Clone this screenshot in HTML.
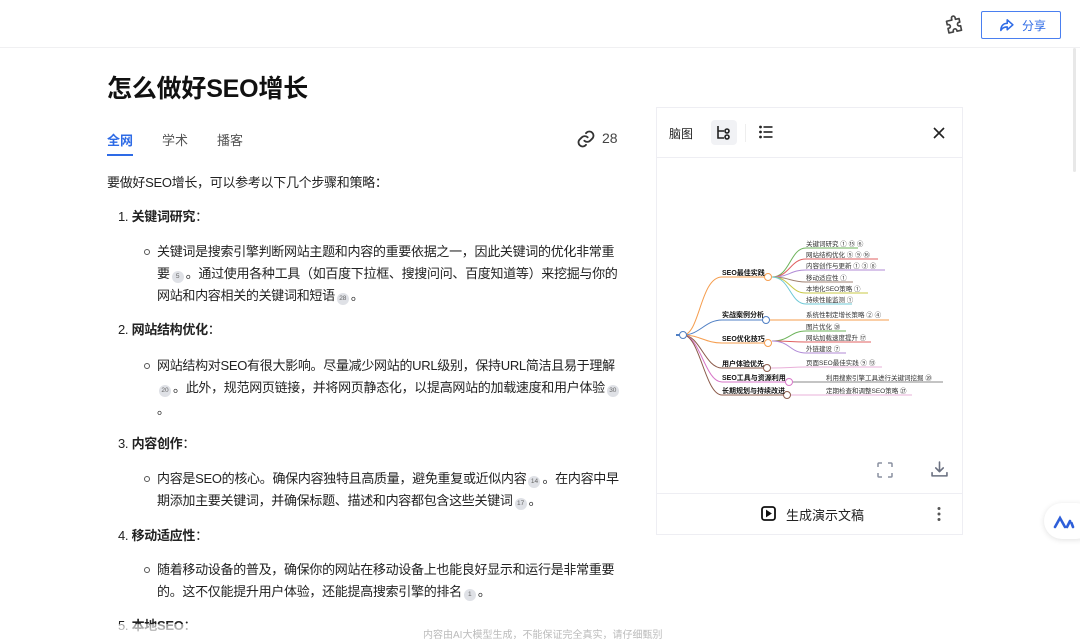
<!DOCTYPE html>
<html><head><meta charset="utf-8"><style>
*{margin:0;padding:0;box-sizing:border-box}
body{width:1080px;height:640px;overflow:hidden;background:#fff;font-family:"Liberation Sans","Noto Sans CJK SC",sans-serif;color:#222;position:relative}
.a{position:absolute;white-space:nowrap}
.l{font-size:13px;line-height:20px;color:#222;letter-spacing:-0.3px}
.c{display:inline-block;width:12px;height:12px;border-radius:50%;background:#dfe1e6;color:#666;font-size:6.5px;line-height:12px;text-align:center;vertical-align:0px;margin:0 2px;letter-spacing:0}
.dot{position:absolute;width:6px;height:6px;border:1px solid #555;border-radius:50%}
b{font-weight:700}
</style></head><body>
<div class="a" style="left:0;top:47px;width:1080px;height:1px;background:#f0f0f2"></div>
<div class="a" style="left:1073px;top:48px;width:3px;height:124px;background:#e8e8e8;border-radius:2px"></div>
<svg class="a" style="left:944px;top:15px" width="22" height="22" viewBox="0 0 24 24" fill="none" stroke="#444" stroke-width="1.8" stroke-linejoin="round"><path d="M10 3a2 2 0 0 1 4 0v2h4v4h-1a2 2 0 0 0 0 4h1v5h-5v-1a2 2 0 0 0-4 0v1H4v-5h1a2 2 0 0 0 0-4H4V5h6z" transform="rotate(-12 12 12)"/></svg>
<div class="a" style="left:981px;top:11px;width:80px;height:28px;border:1px solid #4a7ff0;border-radius:2px"></div>
<svg class="a" style="left:998px;top:17px" width="17" height="17" viewBox="0 0 24 24" fill="none" stroke="#2e6be6" stroke-width="2.2" stroke-linejoin="round"><path d="M13 4l8 7-8 7v-4c-4 0-7 1-9 5 0-6 3-10 9-10z"/></svg>
<div class="a" style="left:1022px;top:17px;font-size:12px;color:#2e6be6">分享</div>

<div class="a" style="left:107px;top:73px;font-size:25px;font-weight:700;color:#111;line-height:32px;letter-spacing:-0.2px">怎么做好SEO增长</div>
<div class="a" style="left:107px;top:130px;font-size:13px;color:#2e6be6;font-weight:700">全网</div>
<div class="a" style="left:107px;top:154px;width:26px;height:2px;background:#2e6be6"></div>
<div class="a" style="left:162px;top:130px;font-size:13px;color:#555">学术</div>
<div class="a" style="left:217px;top:130px;font-size:13px;color:#555">播客</div>
<svg class="a" style="left:576px;top:129px" width="20" height="20" viewBox="0 0 24 24" fill="none" stroke="#333" stroke-width="2.2" stroke-linecap="round"><path d="M10 14a5 5 0 0 0 7 0l3-3a5 5 0 0 0-7-7l-1 1"/><path d="M14 10a5 5 0 0 0-7 0l-3 3a5 5 0 0 0 7 7l1-1"/></svg>
<div class="a" style="left:602px;top:130px;font-size:14px;color:#444">28</div>

<div class="a l" style="left:107px;top:173px">要做好SEO增长，可以参考以下几个步骤和策略：</div>
<div class="a l" style="left:118px;top:207px">1. <b>关键词研究</b>：</div>
<div class="dot" style="left:144px;top:249px"></div>
<div class="a l" style="left:157px;top:242px">关键词是搜索引擎判断网站主题和内容的重要依据之一，因此关键词的优化非常重</div>
<div class="a l" style="left:157px;top:264px">要<span class="c">5</span>。通过使用各种工具（如百度下拉框、搜搜问问、百度知道等）来挖掘与你的</div>
<div class="a l" style="left:157px;top:286px">网站和内容相关的关键词和短语<span class="c">28</span>。</div>
<div class="a l" style="left:118px;top:320px">2. <b>网站结构优化</b>：</div>
<div class="dot" style="left:144px;top:363px"></div>
<div class="a l" style="left:157px;top:356px">网站结构对SEO有很大影响。尽量减少网站的URL级别，保持URL简洁且易于理解</div>
<div class="a l" style="left:157px;top:378px"><span class="c">20</span>。此外，规范网页链接，并将网页静态化，以提高网站的加载速度和用户体验<span class="c">30</span></div>
<div class="a l" style="left:157px;top:400px">。</div>
<div class="a l" style="left:118px;top:434px">3. <b>内容创作</b>：</div>
<div class="dot" style="left:144px;top:476px"></div>
<div class="a l" style="left:157px;top:469px">内容是SEO的核心。确保内容独特且高质量，避免重复或近似内容<span class="c">14</span>。在内容中早</div>
<div class="a l" style="left:157px;top:491px">期添加主要关键词，并确保标题、描述和内容都包含这些关键词<span class="c">17</span>。</div>
<div class="a l" style="left:118px;top:526px">4. <b>移动适应性</b>：</div>
<div class="dot" style="left:144px;top:567px"></div>
<div class="a l" style="left:157px;top:560px">随着移动设备的普及，确保你的网站在移动设备上也能良好显示和运行是非常重要</div>
<div class="a l" style="left:157px;top:582px">的。这不仅能提升用户体验，还能提高搜索引擎的排名<span class="c">1</span>。</div>
<div class="a l" style="left:118px;top:616px">5. <b>本地SEO</b>：</div>
<div class="a" style="left:0;top:624px;width:1080px;height:16px;background:linear-gradient(rgba(255,255,255,.5),#fff)"></div>
<div class="a" style="left:423px;top:626px;font-size:10px;color:#bbb">内容由AI大模型生成，不能保证完全真实，请仔细甄别</div>

<div class="a" style="left:656px;top:107px;width:307px;height:428px;border:1px solid #eeeef3;background:#fff"></div>
<div class="a" style="left:657px;top:157px;width:305px;height:1px;background:#eeeef3"></div>
<div class="a" style="left:657px;top:493px;width:305px;height:1px;background:#eeeef3"></div>
<div class="a" style="left:669px;top:125px;font-size:12px;color:#222">脑图</div>
<div class="a" style="left:711px;top:120px;width:26px;height:25px;background:#f1f2f5;border-radius:4px"></div>
<svg class="a" style="left:716px;top:125px" width="16" height="16" viewBox="0 0 16 16" fill="none" stroke="#222" stroke-width="1.6"><path d="M2 1v12h6M2 6h6"/><circle cx="11" cy="6" r="2"/><circle cx="11" cy="12" r="2"/></svg>
<div class="a" style="left:745px;top:124px;width:1px;height:18px;background:#eee"></div>
<svg class="a" style="left:759px;top:125px" width="14" height="14" viewBox="0 0 14 14" fill="#222"><circle cx="1.5" cy="2" r="1.4"/><circle cx="1.5" cy="7" r="1.4"/><circle cx="1.5" cy="12" r="1.4"/><rect x="4.5" y="1.2" width="9" height="1.6"/><rect x="4.5" y="6.2" width="9" height="1.6"/><rect x="4.5" y="11.2" width="9" height="1.6"/></svg>
<svg class="a" style="left:933px;top:127px" width="12" height="12" viewBox="0 0 12 12" stroke="#222" stroke-width="1.6"><path d="M1 1l10 10M11 1L1 11"/></svg>

<svg class="a" style="left:0;top:0" width="1080" height="640" font-family="Liberation Sans,Noto Sans CJK SC,sans-serif" font-size="7" fill="none">
<g stroke-width="1">
<path d="M683 335C700 335 700 277 722 277H768" stroke="#f59d4e"/>
<path d="M683 335C700 335 705 320 722 320H766" stroke="#4f7fc4"/>
<path d="M683 335C700 335 705 343 722 343H768" stroke="#f59d4e"/>
<path d="M683 335C700 335 705 368 722 368H767" stroke="#8b5a4a"/>
<path d="M683 335C700 335 705 382 722 382H789" stroke="#d776c8"/>
<path d="M683 335C700 335 705 395 722 395H787" stroke="#8b5a4a"/>
<path d="M676 335H683" stroke="#4f7fc4" stroke-width="2"/>
<path d="M772 277C790 277 790 248 806 248H858" stroke="#6db35a"/>
<path d="M772 277C790 277 790 259 806 259H878" stroke="#e06060"/>
<path d="M772 277C790 277 790 270 806 270H885" stroke="#b08ad6"/>
<path d="M772 277C790 277 790 282 806 282H853" stroke="#a08070"/>
<path d="M772 277C790 277 790 293 806 293H868" stroke="#c8c845"/>
<path d="M772 277C790 277 790 304 806 304H852" stroke="#6cc8d6"/>
<path d="M770 320H889" stroke="#f59d4e"/>
<path d="M772 341C790 341 790 331 806 331H846" stroke="#6db35a"/>
<path d="M772 341C790 341 790 342 806 342H871" stroke="#e06060"/>
<path d="M772 341C790 341 790 353 806 353H846" stroke="#b08ad6"/>
<path d="M771 368C790 368 790 367 806 367H882" stroke="#e9b0d9"/>
<path d="M793 382H943" stroke="#888"/>
<path d="M791 395H912" stroke="#e9b0d9"/>
</g>
<g fill="#fff" stroke-width="1">
<circle cx="683" cy="335" r="3.5" stroke="#4f7fc4"/><circle cx="768" cy="277" r="3.5" stroke="#f59d4e"/><circle cx="766" cy="320" r="3.5" stroke="#4f7fc4"/><circle cx="768" cy="343" r="3.5" stroke="#f59d4e"/><circle cx="767" cy="368" r="3.5" stroke="#8b5a4a"/><circle cx="789" cy="382" r="3.5" stroke="#d776c8"/><circle cx="787" cy="395" r="3.5" stroke="#8b5a4a"/>
</g>
<g fill="#111" font-weight="700" font-size="7">
<text x="722" y="275">SEO最佳实践</text><text x="722" y="317">实战案例分析</text><text x="722" y="341">SEO优化技巧</text><text x="722" y="366">用户体验优先</text><text x="722" y="380">SEO工具与资源利用</text><text x="722" y="393">长期规划与持续改进</text>
</g>
<g fill="#333" font-size="6.5">
<text x="806" y="246">关键词研究 ① ⑮ ⑥</text><text x="806" y="257">网站结构优化 ⑤ ⑨ ⑯</text><text x="806" y="268">内容创作与更新 ① ③ ⑧</text><text x="806" y="280">移动适应性 ①</text><text x="806" y="291">本地化SEO策略 ①</text><text x="806" y="302">持续性能监测 ①</text>
<text x="806" y="317">系统性制定增长策略 ② ④</text><text x="806" y="329">图片优化 ⑳</text><text x="806" y="340">网站加载速度提升 ⑰</text><text x="806" y="351">外链建设 ⑦</text><text x="806" y="365">页面SEO最佳实践 ⑨ ⑬</text><text x="826" y="380">利用搜索引擎工具进行关键词挖掘 ⑳</text><text x="826" y="393">定期检查和调整SEO策略 ㉗</text>
</g>
</svg>

<svg class="a" style="left:877px;top:462px" width="16" height="16" viewBox="0 0 16 16" fill="none" stroke="#8a90a0" stroke-width="1.5"><path d="M1 5V2a1 1 0 0 1 1-1h3M11 1h3a1 1 0 0 1 1 1v3M15 11v3a1 1 0 0 1-1 1h-3M5 15H2a1 1 0 0 1-1-1v-3"/></svg>
<svg class="a" style="left:931px;top:461px" width="17" height="17" viewBox="0 0 16 16" fill="none" stroke="#6a7080" stroke-width="1.5" stroke-linecap="round" stroke-linejoin="round"><path d="M8 1v9M4.5 6.5L8 10l3.5-3.5M1 11v3h14v-3"/></svg>
<svg class="a" style="left:761px;top:506px" width="15" height="15" viewBox="0 0 15 15" fill="none" stroke="#111" stroke-width="1.8"><rect x="1" y="1" width="13" height="13" rx="2.5"/><path d="M5.5 4.5v6l4.5-3z" fill="#111" stroke-width="1"/></svg>
<div class="a" style="left:786px;top:505px;font-size:13px;color:#222">生成演示文稿</div>
<svg class="a" style="left:936px;top:506px" width="6" height="16" viewBox="0 0 6 16" fill="#555"><circle cx="3" cy="2.5" r="1.5"/><circle cx="3" cy="8" r="1.5"/><circle cx="3" cy="13.5" r="1.5"/></svg>

<div class="a" style="left:1044px;top:503px;width:50px;height:36px;border-radius:18px;background:#fff;box-shadow:0 1px 6px rgba(0,0,0,.12)"></div>
<svg class="a" style="left:1053px;top:513px" width="22" height="16" viewBox="0 0 22 16" fill="none" stroke="#2e5fd9" stroke-width="2.6" stroke-linecap="round"><path d="M2 14L7 5l5 9"/><path d="M14 14l3-6"/><path d="M20 14l-1.5-4"/></svg>
</body></html>
